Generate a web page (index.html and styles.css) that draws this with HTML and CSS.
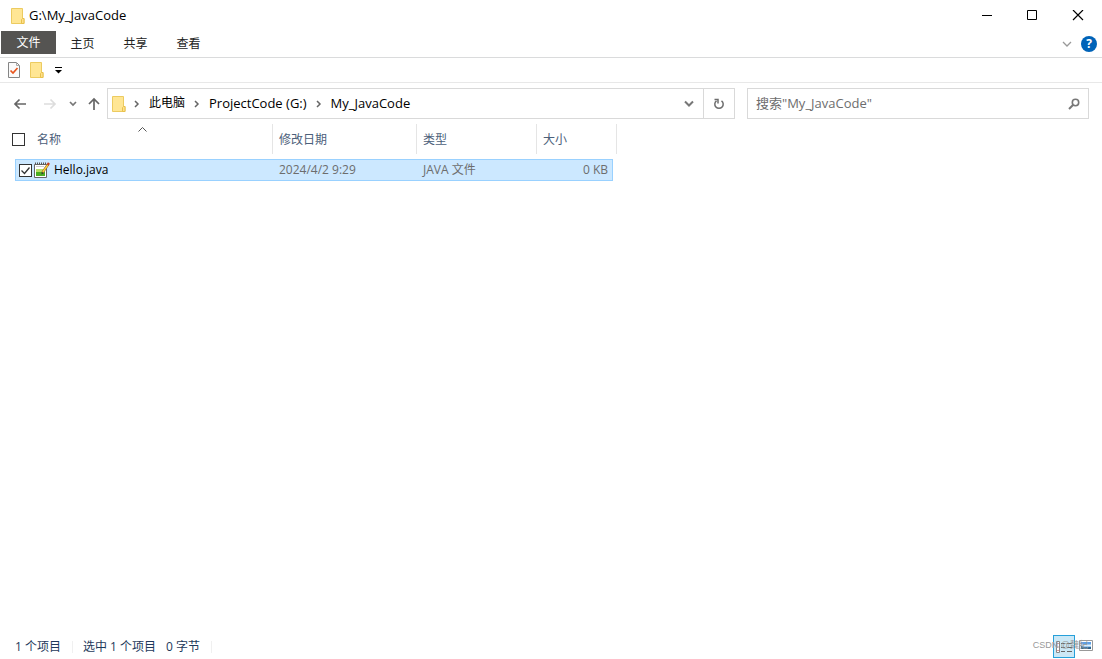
FILE: index.html
```html
<!DOCTYPE html>
<html lang="zh-CN">
<head>
<meta charset="utf-8">
<title>G:\My_JavaCode</title>
<link rel="stylesheet" href="styles.css">
</head>
<body>
<svg class="defs" aria-hidden="true">
  <symbol id="folder" viewBox="0 0 14 16">
    <path d="M.5.5h11v10h1.500v5H.5z" fill="#ffe694" stroke="#eccb60"/>
    <path d="M10.500 15.500v-4l1-1h1.500v5z" fill="#ffe08a" stroke="#e8c14c"/>
  </symbol>
  <symbol id="crumb" viewBox="0 0 6 8"><path d="M1 1l3 3-3 3" fill="none" stroke="#666" stroke-width="1.500"/></symbol>
</svg>
<div class="window">
  <header class="titlebar">
    <svg class="folder"><use href="#folder"/></svg>
    <h1 class="title">G:\My_JavaCode</h1>
    <div class="window-buttons">
      <button aria-label="最小化"><svg width="12" height="12"><path d="M1 5.500h10" stroke="#000"/></svg></button>
      <button aria-label="最大化"><svg width="12" height="12"><path d="M1.500.5h9v9h-9z" fill="none" stroke="#000"/></svg></button>
      <button aria-label="关闭"><svg width="12" height="12"><path d="M1 0l10 10M11 0L1 10" stroke="#000" stroke-width="1.200"/></svg></button>
    </div>
  </header>
  <nav class="ribbon">
    <button class="tab tab-file">文件</button>
    <button class="tab">主页</button>
    <button class="tab">共享</button>
    <button class="tab">查看</button>
    <div class="ribbon-tools">
      <button aria-label="展开功能区"><svg width="10" height="8"><path d="M1 2l4 4 4-4" fill="none" stroke="#999" stroke-width="1.300"/></svg></button>
      <button class="help" aria-label="帮助">?</button>
    </div>
  </nav>
  <div class="quick">
    <button aria-label="属性"><svg width="12" height="16"><path d="M.5.5h8l3 3v12H.5z" fill="#fafafa" stroke="#858585"/><path d="M8.500.5v3h3" fill="none" stroke="#aaa"/><path d="M2.500 8.500L5 11l4.500-5" fill="none" stroke="#e8541c" stroke-width="1.700"/></svg></button>
    <button aria-label="新建文件夹"><svg class="folder"><use href="#folder"/></svg></button>
    <button aria-label="自定义快速访问工具栏"><svg width="8" height="7"><path d="M1 .5h7" stroke="#000"/><path d="M1 3h7L4.500 6.500z"/></svg></button>
  </div>
  <div class="navigation">
    <div class="arrows">
      <button aria-label="后退"><svg width="14" height="12"><path d="M13 6H2M6.500 1.500L2 6l4.500 4.500" fill="none" stroke="#666" stroke-width="1.700"/></svg></button>
      <button aria-label="前进" disabled><svg width="14" height="12"><path d="M1 6h11M7.500 1.500L12 6l-4.500 4.500" fill="none" stroke="#ddd" stroke-width="1.700"/></svg></button>
      <button aria-label="最近位置"><svg width="8" height="6"><path d="M1 1l3 3 3-3" fill="none" stroke="#777" stroke-width="1.700"/></svg></button>
      <button aria-label="上移"><svg width="12" height="14"><path d="M6 13V2M1 7l5-5 5 5" fill="none" stroke="#666" stroke-width="1.700"/></svg></button>
    </div>
    <div class="address">
      <svg class="folder"><use href="#folder"/></svg>
      <svg class="crumb"><use href="#crumb"/></svg>
      <a href="#pc">此电脑</a>
      <svg class="crumb"><use href="#crumb"/></svg>
      <a class="latin" href="#drive">ProjectCode (G:)</a>
      <svg class="crumb"><use href="#crumb"/></svg>
      <a class="latin" href="#here">My_JavaCode</a>
      <button class="history" aria-label="以前的位置"><svg width="10" height="8"><path d="M1 1.500l4 4 4-4" fill="none" stroke="#777" stroke-width="2"/></svg></button>
      <button class="refresh" aria-label="刷新"><svg width="12" height="12"><path d="M8.500 2.800a4.200 4.200 0 1 1-5 0" fill="none" stroke="#6d6d6d" stroke-width="1.500"/><path d="M1.500 1.500H5v4" fill="none" stroke="#6d6d6d" stroke-width="1.500"/></svg></button>
    </div>
    <label class="search">
      <input type="text" placeholder='搜索"My_JavaCode"' aria-label="搜索">
      <svg width="12" height="12"><circle cx="7.500" cy="4.500" r="3.200" fill="none" stroke="#777" stroke-width="1.600"/><path d="M5 7L1 11" stroke="#777" stroke-width="2"/></svg>
    </label>
  </div>
  <main class="content">
    <table class="files">
      <colgroup><col class="col-name"><col class="col-date"><col class="col-type"><col class="col-size"></colgroup>
      <thead>
        <tr>
          <th><div class="name-head"><input type="checkbox" aria-label="全选"><span>名称</span><svg class="sort" width="9" height="5"><path d="M.5 4.500l4-4 4 4" fill="none" stroke="#555"/></svg></div></th>
          <th>修改日期</th><th>类型</th><th>大小</th>
        </tr>
      </thead>
    </table>
    <table class="files rows">
      <colgroup><col class="row-name"><col class="col-date"><col class="col-type"><col class="row-size"></colgroup>
      <tbody>
        <tr>
          <td><div class="name-cell"><input type="checkbox" checked aria-label="选择 Hello.java">
            <svg width="16" height="16" viewBox="0 0 16 16"><path d="M.5 2.500h12v13H.5z" fill="#fff" stroke="#666"/><path d="M2 7h9v4H2z" fill="#b5df62"/><path d="M2 10h9v4H2z" fill="#4cae22"/><path d="M1 1.500h11" stroke="#555" stroke-width="2" stroke-dasharray="1 1"/><path d="M2 4.500h8" stroke="#ccc"/><path d="M8.500 10.500l5.500-8" stroke="#94642a" stroke-width="2.400"/><path d="M8.800 10l5-7.200" stroke="#ffd43b" stroke-width="1.400"/><path d="M13.600 3l1.400-2" stroke="#c8401c" stroke-width="2.400"/><path d="M7.500 12.500l.2-2.500 2 1.300z" fill="#333"/></svg>
            <span>Hello.java</span></div></td>
          <td>2024/4/2 9:29</td><td>JAVA 文件</td><td class="size">0 KB</td>
        </tr>
      </tbody>
    </table>
  </main>
  <footer class="status">
    <span class="status-item">1 个项目</span>
    <span class="status-item status-selected"><span>选中 1 个项目</span><span>0 字节</span></span>
    <div class="views">
      <button class="view view-on" aria-label="详细信息"><svg width="18" height="16"><path d="M1.500 2.500h3v11h-3z" fill="#fff" stroke="#888"/><path d="M3 4v1M3 7.500v1M3 11v1" stroke="#b33"/><path d="M6 4.500h4m2 0h5M6 8.500h4m2 0h5M6 12.500h4m2 0h5" stroke="#666"/></svg></button>
      <button class="view" aria-label="大图标"><svg width="14" height="13"><path d="M.5.5h13v10H.5z" fill="#fff" stroke="#999"/><path d="M2 2h10v7H2z" fill="#5da0e6"/><path d="M2 4.500h10v2H2z" fill="#e0f2fb"/><path d="M2 6l4 1.500 6-.5v2H2z" fill="#2d6288"/></svg></button>
      <span class="watermark">CSDN @魏纪</span>
    </div>
  </footer>
</div>
</body>
</html>
```

FILE: styles.css
```css
* { box-sizing: border-box; }
body { margin: 0; background: #fff; color: #000; font: 12px/18px "Open Sans", "Noto Sans CJK SC", sans-serif; }
button { display: flex; align-items: center; justify-content: center; padding: 0; border: 0; background: none; color: inherit; font: inherit; }
svg { display: block; flex: none; }
a { color: inherit; text-decoration: none; }
.defs { position: absolute; width: 0; height: 0; }
.window { display: flex; flex-direction: column; min-height: 100vh; }
.folder { width: 14px; height: 16px; }

.titlebar { display: flex; align-items: center; gap: 4px; height: 31px; padding-left: 11px; }
.title { margin: 0; padding-bottom: 2px; font-size: 13px; font-weight: 400; }
.window-buttons { display: flex; margin-left: auto; padding-right: 1px; }
.window-buttons button { width: 46px; height: 31px; }
.window-buttons button:first-child { width: 45px; }

.ribbon { display: flex; height: 27px; padding: 0 5px 0 1px; border-bottom: 1px solid #dadbdc; }
.tab { width: 53px; height: 26px; color: #222; }
.tab-file { width: 55px; height: 23px; padding-top: 1px; background: #555452; color: #fff; }
.ribbon-tools { display: flex; align-items: center; gap: 9px; margin-left: auto; }
.help { width: 16px; height: 16px; border-radius: 50%; background: #0063b8; color: #fff; font-weight: 700; line-height: 16px; }

.quick { display: flex; align-items: center; gap: 10px; height: 25px; padding-left: 8px; border-bottom: 1px solid #e8e8e8; }

.navigation { display: flex; align-items: center; padding: 5px 13px; }
.arrows { display: flex; align-items: center; width: 94px; gap: 16px; }
.arrows button:nth-child(3) { margin: 0 -5px 0 -4px; }
.address { display: flex; flex: 622 1 0; align-items: center; height: 31px; padding-left: 4px; border: 1px solid #d9d9d9; }
.address a { margin: 0 9px; padding-bottom: 2px; white-space: nowrap; }
.address .latin { font-size: 13px; }
.crumb { width: 6px; height: 8px; }
.address .folder + .crumb { margin-left: 8px; }
.history { width: 28px; height: 29px; margin-left: auto; }
.refresh { width: 31px; height: 29px; border-left: 1px solid #d9d9d9; }
.search { display: flex; flex: 324 1 0; align-items: center; height: 31px; margin-left: 12px; padding: 0 8px; border: 1px solid #d9d9d9; }
.search input { flex: 1; min-width: 0; padding: 0 0 2px; border: 0; outline: 0; background: none; font: inherit; font-size: 13px; }
.search input::placeholder { color: #6d6d6d; opacity: 1; }

.content { flex: 1; }
.files { border-collapse: separate; border-spacing: 0; table-layout: fixed; width: 617px; }
.files th { height: 30px; padding: 1px 6px 0; border-right: 1px solid #e5e5e5; color: #4c607a; font-weight: 400; text-align: left; }
.col-name { width: 273px; }
.col-date { width: 144px; }
.col-type { width: 120px; }
.col-size { width: 80px; }
.name-head { position: relative; display: flex; align-items: center; gap: 12px; padding-left: 6px; }
.sort { position: absolute; top: -4px; left: 132px; }
.files input { flex: none; appearance: none; width: 13px; height: 13px; margin: 0; border: 1px solid #333; background: #fff; }
.files input:checked { background: #fff url("data:image/svg+xml,%3Csvg xmlns='http://www.w3.org/2000/svg' width='11' height='11'%3E%3Cpath d='M1.500 5.500l3 3 5-6' fill='none' stroke='%23333' stroke-width='1.300'/%3E%3C/svg%3E"); }
.rows { width: 598px; margin: 5px 0 0 15px; }
.row-name { width: 258px; }
.row-size { width: 76px; }
.rows td { height: 22px; padding: 0 6px; border: solid #99d1ff; border-width: 1px 0; background: #cce8ff; color: #6d6d6d; }
.rows td:first-child { padding-left: 3px; border-left-width: 1px; color: #000; }
.rows .size { padding-right: 4px; border-right-width: 1px; text-align: right; }
.name-cell { display: flex; align-items: center; gap: 2px; }
.name-cell span { margin-left: 2px; }

.status { display: flex; align-items: center; height: 25px; padding: 0 5px 0 15px; color: #1e395b; }
.status-item { margin-right: 10px; padding-right: 11px; border-right: 1px solid #f0f0f0; line-height: 12px; }
.status-selected { display: flex; gap: 10px; }
.views { position: relative; display: flex; margin-left: auto; }
.view { width: 22px; height: 23px; }
.view-on { border: 1px solid #26a0da; background: #cbe8f6; }
.watermark { position: absolute; top: 1px; right: 9px; color: #999; font: 9px/18px "Liberation Sans", "Noto Sans CJK SC", sans-serif; white-space: nowrap; pointer-events: none; }
```
